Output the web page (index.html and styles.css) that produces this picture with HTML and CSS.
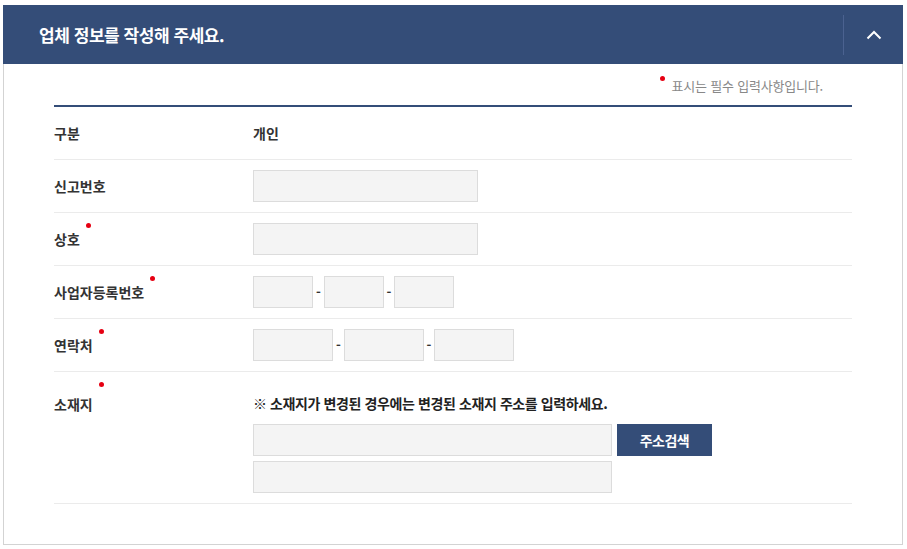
FILE: index.html
```html
<!DOCTYPE html>
<html lang="ko">
<head>
<meta charset="utf-8">
<title>업체 정보</title>
<link rel="stylesheet" href="styles.css">
</head>
<body>
<section class="panel">
  <header class="panel-head">
    <h2 class="panel-title">업체 정보를 작성해 주세요.</h2>
    <button class="toggle" type="button" aria-label="접기">
      <svg width="16" height="10" viewBox="0 0 16 10"><path d="M1.5 8.5 L8 2 L14.5 8.5" fill="none" stroke="#fff" stroke-width="2"/></svg>
    </button>
  </header>
  <div class="panel-body">
    <p class="req-note"><span class="dot dot-inline"></span>표시는 필수 입력사항입니다.</p>
    <div class="form">
      <div class="row">
        <div class="label">구분</div>
        <div class="value strong">개인</div>
      </div>
      <div class="row">
        <div class="label">신고번호</div>
        <div class="value"><input class="field w-225" type="text"></div>
      </div>
      <div class="row">
        <div class="label"><span class="req">상호<span class="dot"></span></span></div>
        <div class="value"><input class="field w-225" type="text"></div>
      </div>
      <div class="row">
        <div class="label"><span class="req">사업자등록번호<span class="dot"></span></span></div>
        <div class="value group">
          <input class="field w-60" type="text"><span class="dash">-</span>
          <input class="field w-60" type="text"><span class="dash dash-n">-</span>
          <input class="field w-60" type="text">
        </div>
      </div>
      <div class="row">
        <div class="label"><span class="req">연락처<span class="dot"></span></span></div>
        <div class="value group">
          <input class="field w-80" type="text"><span class="dash">-</span>
          <input class="field w-80" type="text"><span class="dash dash-n">-</span>
          <input class="field w-80" type="text">
        </div>
      </div>
      <div class="row row-top">
        <div class="label label-top"><span class="req">소재지<span class="dot dot-high"></span></span></div>
        <div class="value addr">
          <p class="addr-note">※ 소재지가 변경된 경우에는 변경된 소재지 주소를 입력하세요.</p>
          <div class="addr-line">
            <input class="field w-359" type="text">
            <button class="btn-search" type="button">주소검색</button>
          </div>
          <div class="addr-line">
            <input class="field w-359" type="text">
          </div>
        </div>
      </div>
    </div>
  </div>
</section>
</body>
</html>
```

FILE: styles.css
```css
* { box-sizing: border-box; }
html, body { margin: 0; padding: 0; background: #fff; }
body {
  padding: 5px 4px 0 3px;
  font-family: "Noto Sans CJK KR", "Noto Sans", sans-serif;
  color: #333;
}
.panel { width: 900px; }
.panel-head {
  height: 59px;
  background: #344d78;
  display: flex;
  align-items: center;
}
.panel-title {
  flex: 1;
  margin: 0;
  padding-left: 36px;
  color: #fff;
  font-size: 17px;
  font-weight: 700;
  letter-spacing: -0.45px;
  line-height: 24px;
}
.toggle {
  width: 60px;
  height: 40px;
  border: 0;
  border-left: 1px solid #4b6290;
  background: transparent;
  display: flex;
  align-items: center;
  justify-content: center;
  padding: 0;
  cursor: pointer;
}
.panel-body {
  border: 1px solid #d3d3d3;
  border-top: 0;
  padding: 0 50px 40px 50px;
}
.req-note {
  margin: 0;
  height: 41px;
  padding-top: 12px;
  text-align: right;
  font-size: 13px;
  letter-spacing: -0.2px;
  line-height: 20px;
  color: #888;
  padding-right: 29px;
}
.dot {
  display: inline-block;
  width: 5px;
  height: 5px;
  border-radius: 50%;
  background: #e60012;
}
.dot-inline {
  vertical-align: top;
  margin-right: 7px;
}
.form { border-top: 2px solid #344d78; }
.row {
  display: flex;
  align-items: center;
  min-height: 53px;
  padding: 10px 0;
  border-bottom: 1px solid #ebebeb;
}
.label {
  width: 199px;
  flex: none;
  font-size: 14px;
  font-weight: 700;
  letter-spacing: 0;
  line-height: 20px;
  color: #333;
}
.req { position: relative; }
.req .dot {
  position: absolute;
  right: -11px;
  top: -6px;
}
.req .dot-high { top: -12px; }
.value { font-size: 14px; line-height: 20px; }
.strong { font-weight: 700; letter-spacing: 0; }
.field {
  height: 32px;
  border: 1px solid #dcdcdc;
  background: #f4f4f4;
  margin: 0;
  padding: 0 8px;
  font: inherit;
}
.w-225 { width: 225px; }
.w-60 { width: 60px; }
.w-80 { width: 80px; }
.w-359 { width: 359px; }
.group { display: flex; align-items: center; }
.dash {
  width: 11px;
  text-align: center;
  font-size: 13px;
  font-weight: 700;
  color: #333;
}
.dash-n { width: 10px; }
.row-top { align-items: flex-start; padding-top: 21px; }
.label-top { padding-top: 1px; }
.addr { display: flex; flex-direction: column; gap: 5px; }
.addr-note {
  margin: 0 0 6px;
  font-size: 14px;
  font-weight: 700;
  letter-spacing: -0.4px;
  line-height: 20px;
  color: #222;
}
.addr-line { display: flex; gap: 5px; }
.btn-search {
  width: 95px;
  height: 32px;
  border: 0;
  background: #344d78;
  color: #fff;
  font: inherit;
  font-size: 14px;
  font-weight: 700;
  letter-spacing: -0.5px;
  padding: 0;
}
```
